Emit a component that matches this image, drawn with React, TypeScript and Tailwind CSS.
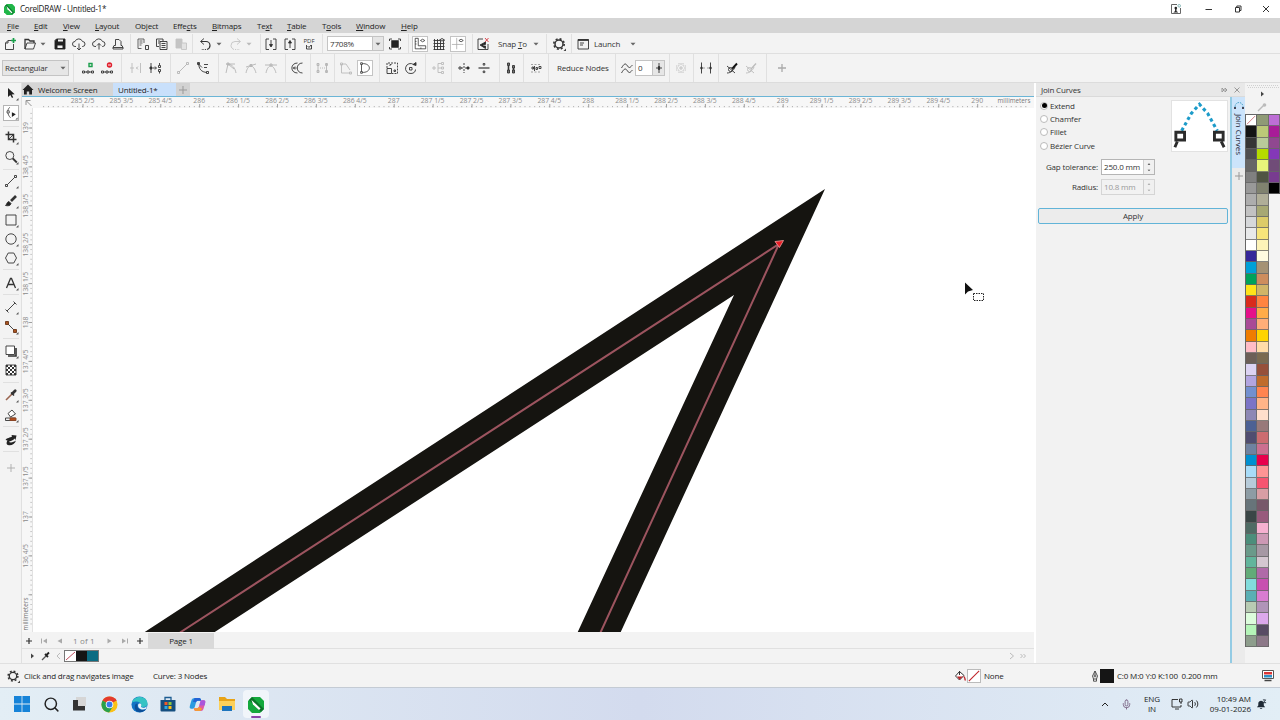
import React from 'react';
import { Settings, Mic, Volume2, Search } from 'lucide-react';

interface IconProps {
  className?: string;
  children: React.ReactNode;
}

const Icon: React.FC<IconProps> = ({ className = '', children }) => (
  <svg
    viewBox="0 0 16 16"
    className={`w-4 h-4 shrink-0 ${className}`}
    fill="none"
    stroke="currentColor"
    strokeWidth={0.9}
  >
    {children}
  </svg>
);

const Sep = ({ className = '' }: { className?: string }) => (
  <div className={`w-px h-full shrink-0 bg-[#e0e0e0] ${className}`} />
);

const Caret = ({ className = '' }: { className?: string }) => (
  <svg viewBox="0 0 8 8" className={`w-2 h-2 shrink-0 text-[#666] ${className}`}>
    <path d="M1.5 2.7h5L4 5.5z" fill="currentColor" />
  </svg>
);

const menus = [
  { pre: '', key: 'F', post: 'ile', width: 'w-[27px]' },
  { pre: '', key: 'E', post: 'dit', width: 'w-[29px]' },
  { pre: '', key: 'V', post: 'iew', width: 'w-[32px]' },
  { pre: '', key: 'L', post: 'ayout', width: 'w-[40px]' },
  { pre: 'Ob', key: 'j', post: 'ect', width: 'w-[38px]' },
  { pre: 'Effe', key: 'c', post: 'ts', width: 'w-[39px]' },
  { pre: '', key: 'B', post: 'itmaps', width: 'w-[45px]' },
  { pre: 'Te', key: 'x', post: 't', width: 'w-[30px]' },
  { pre: '', key: 'T', post: 'able', width: 'w-[35px]' },
  { pre: 'T', key: 'o', post: 'ols', width: 'w-[34px]' },
  { pre: '', key: 'W', post: 'indow', width: 'w-[45px]' },
  { pre: '', key: 'H', post: 'elp', width: 'w-[30px]' },
];

const TitleBar = () => (
  <div className="flex items-center h-[18px] bg-white shrink-0">
    <svg viewBox="0 0 12 12" className="w-[11px] h-[11px] ml-1">
      <path d="M3 0h6l3 3v6l-3 3H3L0 9V3z" fill="#20b648" />
      <path d="M1 2l2-1.5L11 9 9 11.5z" fill="#0e7d30" />
      <path d="M2.6 2.2l1.2 3.4 4.4 4.6 1-1z" fill="#fff" />
    </svg>
    <span className="ml-[5px] text-[8.2px] tracking-[-0.3px] text-[#222]">CorelDRAW - Untitled-1*</span>
    <div className="flex items-center ml-auto text-[#333]">
      <svg viewBox="0 0 10 10" className="w-[10px] h-[10px] mr-[24px]" fill="none" stroke="#666">
        <path d="M6 .5H.5v9h9V4" />
        <circle cx="4.800" cy="4" r="1.300" fill="#222" stroke="none" />
        <path d="M2.500 8.500q.3-1 1.600-1.300V5h1.400v2.200q1.300.3 1.600 1.300z" fill="#222" stroke="none" />
        <circle cx="8.200" cy="1.800" r="1.300" stroke="#6ba6a6" strokeWidth="0.800" />
      </svg>
      <svg viewBox="0 0 8 8" className="w-2 h-2 mr-[21px]" stroke="currentColor">
        <path d="M.5 4.500h6.500" />
      </svg>
      <svg viewBox="0 0 8 8" className="w-2 h-2 mr-[20px]" stroke="currentColor" fill="none">
        <path d="M1.500 2.500h4V7h-4zM2.800 2.500V1H7v4.500H5.500" />
      </svg>
      <svg viewBox="0 0 8 8" className="w-2 h-2 mr-[10px]" stroke="currentColor">
        <path d="M1 1l6 6M7 1L1 7" />
      </svg>
    </div>
  </div>
);

const MenuBar = () => (
  <div className="flex items-center h-[15px] bg-[#d5d5d5] pl-[7px] shrink-0 text-[8px] text-[#222]">
    {menus.map((m) => (
      <span key={m.pre + m.key + m.post} className={`${m.width} shrink-0 whitespace-nowrap`}>
        {m.pre}
        <span className="underline underline-offset-1">{m.key}</span>
        {m.post}
      </span>
    ))}
  </div>
);

const StandardBar = () => (
  <div className="flex items-center h-[21px] pt-px bg-[#f3f3f3] border-b border-[#dfdfdf] shrink-0 text-[8px] text-[#333]">
    <Icon className="ml-[2px]">
      <path d="M9 4.500H6L3.500 7v6.500h8V8M6 4.500V7H3.500" />
      <path d="M11.500 2v5M9 4.500h5" stroke="#18a04a" strokeWidth="1.700" />
    </Icon>
    <Icon className="ml-1">
      <path d="M3 13V3.500h3.500L8 5h4v2" strokeWidth="1.300" />
      <path d="M3 13l2-6h8.500l-2 6z" />
    </Icon>
    <Caret className="ml-px" />
    <Icon className="ml-[5px]">
      <path d="M4.500 3H13v10H3V4.500z" fill="#222" stroke="#222" />
      <path d="M6 3.500h5v2H6zM5.500 9.500h5v2.500h-5z" fill="#f3f3f3" stroke="none" />
    </Icon>
    <Icon className="ml-[3px]">
      <path d="M5 10.500H4a2.400 2.400 0 010-5 4 4 0 017.500 0 2.500 2.500 0 010 5H11" />
      <path d="M8 7.500V14M6 12l2 2 2-2" />
    </Icon>
    <Icon className="ml-1">
      <path d="M5 10.500H4a2.400 2.400 0 010-5 4 4 0 017.500 0 2.500 2.500 0 010 5H11" />
      <path d="M8 13.500V7.500M6 9.500l2-2 2 2" />
    </Icon>
    <Icon className="ml-[3px]">
      <path d="M5.500 9.500v-6h3.500l2 2v4M5.500 9.500H4l-1 2v1.500h10v-1.500l-1-2h-1M3 11.500h10" />
    </Icon>
    <Sep className="ml-1" />
    <Icon className="ml-1">
      <path d="M6.500 12.500H3V3h6v4M4.500 5h3M4.500 7h3M4.500 9h2" stroke="#555" />
      <path d="M10.500 9.500h3v4h-3z" />
    </Icon>
    <Icon className="ml-[3px]">
      <path d="M5 10.500H2.500V3H9v2M4 5h2M4 7h1.500" />
      <path d="M6 5.500h7v8H6zM7.500 7.500h4M7.500 9.500h4M7.500 11.500h4" />
    </Icon>
    <Icon className="ml-[3px] text-[#c4c4c4]">
      <path d="M3 3h6v9H3z" fill="#c4c4c4" />
      <path d="M8.500 7h5v6.500h-5z" fill="#e2e2e2" />
    </Icon>
    <Sep className="ml-[3px]" />
    <Icon className="ml-1">
      <path d="M4 5.500h5a4 4 0 014 4c0 2-1.500 3.500-3 4" strokeWidth="1.200" />
      <path d="M7 2.500l-3.500 3 3.500 3" />
      <path d="M9 13.500H4" strokeDasharray="1.200 1.200" />
    </Icon>
    <Caret className="ml-[2px]" />
    <Icon className="ml-[5px] text-[#c4c4c4]">
      <path d="M12 5.500H7a4 4 0 00-4 4c0 2 1.500 3.500 3 4" />
      <path d="M9 2.500l3.500 3-3.500 3" />
      <path d="M7 13.500h5" strokeDasharray="1.200 1.200" />
    </Icon>
    <Caret className="ml-px opacity-40" />
    <Sep className="ml-[7px]" />
    <Icon className="ml-[2px]">
      <path d="M6 3H3v10.500h3M10 3h3v10.500h-3M8 4v6" />
      <path d="M6.500 8.500h3L8 11z" fill="#222" />
    </Icon>
    <Icon className="ml-[3px]">
      <path d="M6 3H3v10.500h3M10 3h3v10.500h-3M8 6v6" />
      <path d="M6.500 7h3L8 4.500z" fill="#222" />
    </Icon>
    <div className="flex flex-col items-center w-4 ml-[3px]">
      <span className="text-[6px] leading-[6px] tracking-normal">PDF</span>
      <svg viewBox="0 0 8 6" className="w-2 h-[6px]" fill="none" stroke="currentColor" strokeWidth="0.900">
        <path d="M1.500 1v4h5V1M2.500 2l1.500 1.500L6 1" />
      </svg>
    </div>
    <Sep className="ml-[5px]" />
    <div className="flex items-center w-[57px] h-[15px] ml-1 bg-white border border-[#c4c4c4] shrink-0">
      <span className="pl-[2px]">7708%</span>
      <div className="flex items-center justify-center w-[11px] h-full ml-auto bg-[#e6e6e6] border-l border-[#c4c4c4]">
        <Caret />
      </div>
    </div>
    <Icon className="ml-[3px]">
      <path d="M5 5h6v6H5z" fill="#222" stroke="#222" strokeWidth="1.500" />
      <path d="M2.500 5V3H5M11 3h2.500v2M13.500 11v2H11M5 13H2.500v-2" />
    </Icon>
    <Sep className="ml-[5px]" />
    <Icon className="ml-[3px] bg-white border border-[#c4c4c4]">
      <path d="M2.500 1.500v12h12v-3.500H6V1.500z" />
      <path d="M8.500 4q2.500-3 5 0-2.500 3-5 0z" />
      <path d="M2.500 5h1.500M2.500 8h1.500M9 13.500v-1.500" />
    </Icon>
    <Icon className="ml-[3px]">
      <path d="M3.500 3v11M6.500 3v11M9.500 3v11M12.500 3v11M2.500 4.500h11M2.500 7.500h11M2.500 10.500h11M2.500 13.500h11" />
      <path d="M8.500 4q2.500-3 5 0-2.500 2-5 0z" fill="#eee" />
    </Icon>
    <Icon className="ml-[3px] bg-white border border-[#c4c4c4]">
      <path d="M6.500 1v13M1 8.500h13" stroke="#aaa" />
      <path d="M9 4q2.500-3 5 0-2.500 3-5 0z" />
    </Icon>
    <Sep className="ml-[6px]" />
    <Icon className="ml-[2px]">
      <path d="M8 3H3v10.500h10V8" />
      <path d="M10.500 6L5 9l5.500 3.500v-2.500H8V8.500h2.500z" fill="#222" />
      <path d="M10 2l3.500 4M13.500 2L10 6" stroke="#d8343c" />
    </Icon>
    <span className="w-[30px] ml-[7px] shrink-0 whitespace-nowrap">
      Snap <span className="underline underline-offset-1">T</span>o
    </span>
    <Caret className="ml-1" />
    <Sep className="ml-[6px]" />
    <Icon className="ml-1">
      <circle cx="8" cy="8" r="4" strokeWidth="1.500" />
      <circle cx="8" cy="8" r="5.200" strokeWidth="1.600" strokeDasharray="2 2.080" />
      <path d="M15 12.500V15h-2.500z" fill="#444" stroke="none" />
    </Icon>
    <Sep className="ml-1" />
    <Icon className="ml-[3px]">
      <path d="M3 3.500h10.500v9.500H3z" />
      <path d="M3 4h10.500" strokeWidth="1.800" />
      <path d="M5 7h4M5 9h3" />
    </Icon>
    <span className="w-[28px] ml-[3px] shrink-0">Launch</span>
    <Caret className="ml-[7px]" />
  </div>
);

const PropertyBar = () => (
  <div className="flex items-center h-[29px] bg-[#f3f3f3] border-b border-[#dcdcdc] shrink-0 text-[8px] text-[#333]">
    <div className="flex items-center w-[67px] h-4 ml-[2px] bg-[#e6e6e6] border border-[#c4c4c4] shrink-0">
      <span className="pl-[2px]">Rectangular</span>
      <Caret className="ml-auto mr-px" />
    </div>
    <Sep className="ml-1" />
    <Icon className="ml-[6px]">
      <path d="M2.500 11h2v2h-2zM7 11h2v2H7zM11.500 11h2v2h-2zM4.500 12H7M9 12h2.500" />
      <path d="M9 3.500h3V6.500H9z" stroke="#1b9e4b" strokeWidth="1.400" />
    </Icon>
    <Icon className="ml-[3px]">
      <path d="M2.500 11h2v2h-2zM7 11h2v2H7zM11.500 11h2v2h-2zM4.500 12H7M9 12h2.500" />
      <circle cx="10.500" cy="5" r="2.700" fill="#e01f2d" stroke="none" />
      <path d="M9 5h3" stroke="#fff" />
    </Icon>
    <Sep className="ml-[6px]" />
    <Icon className="ml-[6px] text-[#bbb]">
      <path d="M4 3v3M4 10v3M12.500 3v10M3 7h2v2H3zM8 8h1.500M10 6.500L8.500 8 10 9.500" />
    </Icon>
    <Icon className="ml-[3px]">
      <path d="M4 3v10M6 8h3M8 6.500L9.500 8 8 9.500M12.500 3v2M12.500 11.500v2M11.500 5.500h2v2h-2zM11.500 9.500h2v2h-2z" />
      <path d="M3 7h2v2H3z" fill="#333" />
    </Icon>
    <Sep className="ml-[7px]" />
    <Icon className="ml-1 text-[#b4b4b4]">
      <path d="M4 12l8-8M2.500 11.500h2v2h-2zM11.500 2.500h2v2h-2z" />
    </Icon>
    <Icon className="ml-1">
      <path d="M3 3.500l4 4M3.500 3C4 9 6 12 12 12.500M2.500 2.500h2v2h-2zM11.500 11.500h2v2h-2zM9 4.500h4M9 7.500h3" />
    </Icon>
    <Sep className="ml-[7px]" />
    <Icon className="ml-1 text-[#b4b4b4]">
      <path d="M3 4h9M5 4l-2 9M5 4c5 1 7 4 8 9M5 4l6 5M4 3h2v2H4z" />
    </Icon>
    <Icon className="ml-1 text-[#b4b4b4]">
      <path d="M3 7l10-3M3 13c1-5 3-7 5-7s4 3 5 7M7 4.500h2v2H7z" />
    </Icon>
    <Icon className="ml-1 text-[#b4b4b4]">
      <path d="M2 5h12M3 13c1-5 3-7 5-7s4 3 5 7M7 4h2v2H7z" />
    </Icon>
    <Sep className="ml-[6px]" />
    <Icon className="ml-[3px]">
      <path d="M8.500 3C1 3 1 13 8.500 13M13.500 3c-7 0-7 10 0 10M4 8h3.500M6 6.500L4.500 8 6 9.500" />
    </Icon>
    <Sep className="ml-[5px]" />
    <Icon className="ml-[3px] text-[#b4b4b4]">
      <path d="M4 3v10M12.500 3v10M3 3.500h2v2H3zM3 10.500h2v2H3zM11.500 3.500h2v2h-2zM11.500 10.500h2v2h-2z" />
      <path d="M6 8h5" strokeDasharray="1 1" />
    </Icon>
    <Sep className="ml-1" />
    <Icon className="ml-[3px] text-[#bbb]">
      <path d="M3.500 4v9h9M4 4h4l4 6M2.500 3h2v2h-2zM11.500 12h2v2h-2z" />
    </Icon>
    <Icon className="ml-[3px] bg-white border border-[#c4c4c4]">
      <path d="M4 3v10M4 3c12-1 12 11 0 10" />
      <path d="M3 2h2v2H3zM3 12h2v2H3z" fill="#fff" />
    </Icon>
    <Sep className="ml-[6px]" />
    <Icon className="ml-1">
      <path d="M3 8.500h4.500v5H3z" />
      <path d="M3 8V3h10.500v10.500H8" strokeDasharray="2 1" />
      <path d="M10 10h1.500v1.500H10zM6 6V4.500h1.500" />
    </Icon>
    <Icon className="ml-[3px]">
      <path d="M10.500 4.500A5 5 0 108 13.500c3 0 4.500-2 4.500-4" />
      <path d="M6.500 7.500H9V10H6.500z" />
      <path d="M10 4.500l3-2v3z" fill="#333" />
    </Icon>
    <Sep className="ml-[6px]" />
    <Icon className="ml-1 text-[#bbb]">
      <path d="M11.500 2.500h2v2h-2zM11.500 7h2v2h-2zM11.500 11.500h2v2h-2zM3 7h2v2H3zM8 3.500h3M8 8h3M8 12.500h3M8 3.500v9" />
    </Icon>
    <Sep className="ml-[5px]" />
    <Icon className="ml-1">
      <path d="M8 3v10" strokeDasharray="2 1" />
      <path d="M3 7h2v2H3zM5 8h2M9 8h2" />
      <path d="M11 7h2v2h-2z" fill="#222" />
    </Icon>
    <Icon className="ml-1">
      <path d="M2.500 8h11" strokeWidth="1.200" />
      <path d="M7.200 3.500h1.600v1.600H7.200zM7.200 11h1.600v1.600H7.200z" />
    </Icon>
    <Sep className="ml-[7px]" />
    <Icon className="ml-[3px]">
      <path d="M5.500 5.500V10M10.500 8v2" strokeWidth="1.600" />
      <path d="M4.500 3h2v2.500h-2zM9.500 5.500h2V8h-2zM4.500 10h2v3h-2zM9.500 10h2v3h-2z" fill="#777" />
    </Icon>
    <Sep className="ml-1" />
    <Icon className="ml-1">
      <path d="M3 4.500h10M3 12h10" strokeDasharray="2 1.500" stroke="#999" />
      <path d="M4 7h1.500v2H4zM8 7.500h1.500v2H8zM11 6.500h2v2h-2zM6.500 6v5" />
    </Icon>
    <Sep className="ml-1" />
    <span className="w-[50px] ml-2 shrink-0 whitespace-nowrap">Reduce Nodes</span>
    <Sep className="ml-2" />
    <Icon className="ml-[3px]">
      <path d="M2.500 8c3-5 4-5 6-2s3 1 5-1M2.500 13c3-5 4-5 6-2s3 1 5-1" />
    </Icon>
    <div className="flex items-center w-[30px] h-4 bg-white border border-[#c4c4c4] shrink-0">
      <span className="pl-[2px]">0</span>
      <div className="flex items-center justify-center w-[12px] h-full ml-auto bg-[#e6e6e6] border-l border-[#c4c4c4]">
        <svg viewBox="0 0 8 10" className="w-2 h-[10px]" stroke="#333" strokeWidth="0.900">
          <path d="M4 0v10M1 5h6" />
          <path d="M3.400 3.500h1.200v3H3.400z" fill="#222" />
        </svg>
      </div>
    </div>
    <Sep className="ml-1" />
    <Icon className="ml-[3px] text-[#c0c0c0]">
      <path d="M6 3v3H3M10 3v3h3M6 13v-3H3M10 13v-3h3" strokeDasharray="1.500 0.800" />
      <path d="M7 7h2v2H7zM8 3v2M8 11v2M3 8h2M11 8h2" />
    </Icon>
    <Sep className="ml-1" />
    <Icon className="ml-1">
      <path d="M3.500 2.500v11M12.500 2.500v11" />
      <path d="M2.900 7h1.200v2H2.900zM11.900 7h1.200v2h-1.200z" fill="#333" />
      <path d="M5 8h2M9 8h2" stroke="#999" />
    </Icon>
    <Sep className="ml-1" />
    <Icon className="ml-[5px]">
      <path d="M3 6l8 7M3 13c4 0 7-3 8-6" />
      <path d="M8 9l5-5.500" stroke="#111" strokeWidth="1.900" />
      <circle cx="6.500" cy="9.500" r="2" />
    </Icon>
    <Icon className="ml-[3px] text-[#bbb]">
      <path d="M3 6l8 7M3 13c4 0 7-3 8-6" />
      <path d="M8 9l5-5.500" strokeWidth="1.300" />
      <circle cx="6.500" cy="9.500" r="2" />
    </Icon>
    <Sep className="ml-[7px]" />
    <Icon className="ml-[7px] text-[#aaa]">
      <path d="M8 4v8M4 8h8" strokeWidth="1.300" />
    </Icon>
  </div>
);

interface ToolProps {
  className?: string;
  flyout?: boolean;
  children: React.ReactNode;
}

const Tool: React.FC<ToolProps> = ({ className = '', flyout = true, children }) => (
  <Icon className={className}>
    {children}
    {flyout && <path d="M15.500 13v2.500H13z" fill="#555" stroke="none" />}
  </Icon>
);

const Toolbox = () => (
  <div className="flex flex-col items-center w-[21px] h-full bg-[#f3f3f3] shrink-0 text-[#333]">
    <Tool className="mt-[2px]">
      <path d="M5 3v9l2.300-2 1.700 3 1.200-.8-1.500-2.700 3-.3z" fill="#222" stroke="none" />
    </Tool>
    <Tool className="mt-1 bg-white border border-[#b4b4b4]">
      <path d="M6.500 1.500c-3 3-3 8 1 12" />
      <path d="M3.500 5.500h2.500v2.500H3.500z" fill="#fff" />
      <path d="M9 7v5.500l4.500-3z" fill="#222" stroke="none" />
    </Tool>
    <div className="w-4 h-px mt-[5px] bg-[#e0e0e0]" />
    <Tool className="mt-[2px]">
      <path d="M5.500 2.500v8H13.500M2.500 5.500h8V13.500" strokeWidth="1.500" />
      <path d="M5 11l6-6" />
    </Tool>
    <Tool className="mt-1">
      <circle cx="6.800" cy="6.500" r="4" />
      <path d="M9.800 9.500l4 4" strokeWidth="1.800" />
    </Tool>
    <div className="w-4 h-px mt-1 bg-[#e0e0e0]" />
    <Tool className="mt-[3px]">
      <path d="M4.500 11.500l7-7M2.500 11.500h2v2h-2zM11.500 2.500h2v2h-2z" />
    </Tool>
    <Tool className="mt-1">
      <path d="M13 3L8 8" strokeWidth="2.600" />
      <path d="M2.500 12.500c1 0 1-3.500 3.500-4l2 2c-.5 2.500-3 2.500-5.500 2z" fill="#222" />
    </Tool>
    <Tool className="mt-[3px]">
      <path d="M3 3h10v10H3z" />
    </Tool>
    <Tool className="mt-[3px]">
      <circle cx="8" cy="8" r="5.200" />
    </Tool>
    <Tool className="mt-[3px]">
      <path d="M5.200 3h5.600l2.700 5-2.700 5H5.200L2.500 8z" />
    </Tool>
    <div className="w-4 h-px mt-[3px] bg-[#e0e0e0]" />
    <Tool className="mt-[5px]">
      <path d="M3.500 13L7.500 3.500h1l4 9.500M5 9.500h6" strokeWidth="1.300" />
    </Tool>
    <div className="w-4 h-px mt-[3px] bg-[#e0e0e0]" />
    <Tool className="mt-1">
      <path d="M4 12l8-8M2.500 10.500l3 3M10.500 2.500l3 3" />
    </Tool>
    <Tool className="mt-1">
      <path d="M4 4l8 8" />
      <path d="M2.500 2.500h3v3h-3zM10.500 10.500h3v3h-3z" fill="#a85420" stroke="#6b3518" />
    </Tool>
    <div className="w-4 h-px mt-[3px] bg-[#e0e0e0]" />
    <Tool className="mt-1">
      <path d="M5 13h8V5" strokeWidth="1.600" />
      <path d="M3 3h8.500v8.500H3z" fill="#fff" />
    </Tool>
    <Tool className="mt-[3px]" flyout={false}>
      <path d="M3 3h10v10H3z" fill="#fff" />
      <path d="M3 4h10M3 8h10M3 12h10" strokeDasharray="2 2" strokeWidth="2" />
      <path d="M5 6h8M5 10h8" strokeDasharray="2 2" strokeWidth="2" />
    </Tool>
    <div className="w-4 h-px mt-1 bg-[#e0e0e0]" />
    <Tool className="mt-1">
      <path d="M3 13l6-6" stroke="#9a6550" strokeWidth="1.600" />
      <path d="M8 5.500l3 3" strokeWidth="1.600" />
      <path d="M9.500 6.500l2.700-2.700" strokeWidth="2.800" strokeLinecap="round" />
    </Tool>
    <Tool className="mt-1">
      <path d="M5 6.500l4-3.500 3.500 4-5 3z" fill="#fff" />
      <path d="M2.500 11h10v2.500h-10z" fill="#eee" />
      <path d="M7 11h6v2.500H7z" fill="#b34d1b" stroke="#8a4524" />
    </Tool>
    <div className="w-4 h-px mt-[3px] bg-[#e0e0e0]" />
    <Tool className="mt-[5px]" flyout={false}>
      <path d="M2.500 8C4 5.500 7 6 9 4.500L8.500 3l5 .5-1 4.500-1-1.500C10 9 7 8.500 6 10c2 1 5 0 7-1.500C12 12 8 14 5 13c-2-.7-1.500-3-.5-4.500z" fill="#222" stroke="none" />
    </Tool>
    <div className="w-4 h-px mt-[3px] bg-[#e0e0e0]" />
    <Tool className="mt-2 text-[#aaa]" flyout={false}>
      <path d="M8 4v8M4 8h8" />
    </Tool>
  </div>
);

const fifths = ['', ' 1/5', ' 2/5', ' 3/5', ' 4/5'];
const STEP = 38.9;

// labels count in fifths of a millimetre
const hLabels = Array.from({ length: 24 }, (_, i) => {
  const n = i + 2;
  return { x: 82.5 + i * STEP, text: `${285 + Math.floor(n / 5)}${fifths[n % 5]}` };
});

const vLabels = Array.from({ length: 13 }, (_, i) => {
  const n = 5 * 139 - i;
  return { y: 128 + i * STEP, text: `${Math.floor(n / 5)}${fifths[n % 5]}` };
});

const hTicks = Array.from({ length: 203 }, (_, i) => 43.6 + (i * STEP) / 8);
const vTicks = Array.from({ length: 106 }, (_, i) => 113.4 + (i * STEP) / 8);

const TopRuler = () => (
  <svg viewBox="22 97 1012 11" className="w-[1012px] h-[11px] bg-[#f7f7f7] shrink-0 tracking-normal">
    <path d="M26 105V100.500h4.500M26.500 101l5 5" stroke="#888" strokeWidth={0.9} fill="none" />
    {hTicks.map((x) => (
      <path key={x} d={`M${x} 106v1.200`} stroke="#aaa" strokeWidth={0.9} />
    ))}
    {hLabels.map((l) => (
      <g key={l.text}>
        <path d={`M${l.x + 0.5} 104v3.500`} stroke="#999" strokeWidth={0.9} />
        <text x={l.x} y={103} fontSize={6.8} textAnchor="middle" fill="#8b8b8b">
          {l.text}
        </text>
      </g>
    ))}
    <text x={1014} y={103} fontSize={6.3} textAnchor="middle" fill="#777">
      millimeters
    </text>
  </svg>
);

const SideRuler = () => (
  <svg viewBox="22 108 11 524" className="w-[11px] h-[524px] bg-[#f7f7f7] shrink-0 tracking-normal">
    <path d="M32.500 108v524" stroke="#e2e2e2" />
    {vTicks.map((y) => (
      <path key={y} d={`M30.500 ${y}h1.200`} stroke="#aaa" strokeWidth={0.9} />
    ))}
    {vLabels.map((l) => (
      <g key={l.text}>
        <path d={`M28.500 ${l.y}h3.500`} stroke="#999" strokeWidth={0.9} />
        {l.y < 580 && (
          <text
            transform={`translate(27.500 ${l.y}) rotate(-90)`}
            fontSize={6.8}
            textAnchor="middle"
            fill="#8b8b8b"
          >
            {l.text}
          </text>
        )}
      </g>
    ))}
    <text transform="translate(27.500 614) rotate(-90)" fontSize={6.3} textAnchor="middle" fill="#777">
      millimeters
    </text>
  </svg>
);

const Canvas = () => (
  <svg viewBox="33 108 1001 524" className="w-[1001px] h-[524px] bg-white shrink-0">
    <path d="M144 632.500L825 189 620.500 632.500H577.500L734 295 214 632.500z" fill="#151410" />
    <path d="M180 632.500L779 244 600.500 632.500" fill="none" stroke="#9c545f" strokeWidth={2} />
    <path d="M775 241.500l8.500-1-4 7z" fill="#e81c24" stroke="#f4a0a0" strokeWidth={0.8} />
    <path d="M965 282.500v12l3-3 5-1.500z" fill="#111" />
    <path d="M973.500 293.500h10v7h-10z" fill="none" stroke="#222" strokeDasharray="1.500 1" />
  </svg>
);

const Workspace = () => (
  <div className="flex flex-col w-[1013px] h-full border-l border-[#e0e0e0] bg-[#f3f3f3] shrink-0">
    <div className="flex items-center h-[13px] bg-[#e6e6e6] text-[8px] text-[#222] shrink-0">
      <div className="flex items-center w-[91px] h-full bg-[#d5d5d5]">
        <svg viewBox="0 0 12 11" className="w-3 h-[11px] shrink-0" fill="#222">
          <path d="M6 .5L.5 6H2v4.500h2.800V7.500h2.400v3H10V6h1.500z" />
        </svg>
        <span className="ml-[4px] whitespace-nowrap">Welcome Screen</span>
      </div>
      <div className="flex items-center w-[63px] h-full pl-[5px] bg-[#c9e0fb]">Untitled-1*</div>
      <div className="flex items-center justify-center w-[14px] h-full bg-[#d2d2d2]">
        <svg viewBox="0 0 8 8" className="w-2 h-2" stroke="#999">
          <path d="M4 0v8M0 4h8" />
        </svg>
      </div>
    </div>
    <div className="h-px bg-[#6bb5d6] shrink-0" />
    <TopRuler />
    <div className="flex shrink-0">
      <SideRuler />
      <Canvas />
    </div>
    <div className="flex items-center h-[17px] pt-px shrink-0 border-b border-[#e0e0e0] text-[8px] text-[#888]">
      <svg viewBox="22 0 40 16" className="w-[40px] h-4 shrink-0" fill="#aaa">
        <path d="M29 5v6M26 8h6" stroke="#333" strokeWidth="1.200" />
        <path d="M41.500 5.500v5" stroke="#aaa" />
        <path d="M47 5.500v5L43 8zM62 5.500v5L57.500 8z" />
      </svg>
      <span className="w-[28px] ml-[11px] tracking-[0.15px] whitespace-nowrap">1 of 1</span>
      <svg viewBox="104 0 44 16" className="w-[44px] h-4 ml-[3px] shrink-0" fill="#aaa">
        <path d="M107.500 5.500v5l4-2.500zM122 5.500v5l4-2.500z" />
        <path d="M127.500 5.500v5" stroke="#aaa" />
        <path d="M140 5v6M137 8h6" stroke="#333" strokeWidth="1.200" />
      </svg>
      <div className="flex items-center justify-center w-[66px] h-4 bg-[#d9d9d9] text-[#222]">Page 1</div>
    </div>
    <div className="flex items-center h-[14px] shrink-0">
      <svg viewBox="22 0 42 14" className="w-[42px] h-[14px] shrink-0">
        <path d="M31 4.500v5l3-2.500z" fill="#444" />
        <path d="M42 11l4-4" stroke="#555" strokeWidth="1.300" />
        <path d="M45 5l3 3M46.500 6l2.500-2.500" stroke="#222" strokeWidth="1.800" />
        <path d="M60 4l-3 3 3 3" stroke="#bbb" fill="none" />
      </svg>
      <div className="flex h-3 border border-[#777] shrink-0">
        <svg viewBox="0 0 11 10" className="w-[11px] h-[10px] bg-white">
          <path d="M1 9l9-8" stroke="#c05060" />
        </svg>
        <div className="w-[11px] bg-[#151515]" />
        <div className="w-[11px] bg-[#0b6b82]" />
      </div>
      <svg viewBox="0 0 24 10" className="w-6 h-[10px] ml-auto mr-[2px]" fill="none" stroke="#bbb">
        <path d="M2 2l3.500 3L2 8M12.500 3l2 2-2 2M15.500 3l2 2-2 2" />
      </svg>
    </div>
  </div>
);

const joinModes = ['Extend', 'Chamfer', 'Fillet', 'Bézier Curve'];

const Spinner = ({ value, disabled = false }: { value: string; disabled?: boolean }) => (
  <div
    className={`flex items-center w-[54px] h-4 border ${
      disabled ? 'border-[#d5d5d5] text-[#999]' : 'border-[#b5b5b5] bg-white text-[#333]'
    }`}
  >
    <span className="pl-[2px] whitespace-nowrap">{value}</span>
    <svg viewBox="0 0 11 14" className="w-[11px] h-[14px] ml-auto bg-[#f0f0f0] border-l border-[#d0d0d0]">
      <path d="M4 4.500h3L5.500 3zM4 10h3l-1.500 1.500z" fill="currentColor" />
    </svg>
  </div>
);

const JoinCurvesDocker = () => (
  <div className="flex w-[209px] h-full flex-col shrink-0 bg-[#f2f2f2] text-[8px] text-[#333]">
    <div className="flex items-center h-[14px] pl-[5px] bg-[#e8e8e8] border-b border-[#dadada] shrink-0">
      <span>Join Curves</span>
      <svg viewBox="0 0 20 8" className="w-5 h-2 ml-auto mr-[4px]" fill="none" stroke="#999">
        <path d="M1 2l2 2-2 2zM4 2l2 2-2 2zM13.500 1.500l5 5M18.500 1.500l-5 5" />
      </svg>
    </div>
    <div className="flex flex-1">
      <div className="flex flex-col w-[194px] pl-[2px]">
        <div className="flex justify-between h-[56px] shrink-0">
          <div className="flex flex-col pt-[2px] pl-[2px]">
            {joinModes.map((mode, i) => (
              <label key={mode} className="flex items-center h-[13.4px]">
                <span className="flex items-center justify-center w-2 h-2 rounded-full border border-[#bbb] bg-white">
                  {i === 0 && <span className="w-[5px] h-[5px] rounded-full bg-black shrink-0" />}
                </span>
                <span className="ml-[2px]">{mode}</span>
              </label>
            ))}
          </div>
          <svg viewBox="0 0 57 50" className="w-[57px] h-[52px] mt-[3px] mr-[2px] bg-white border border-[#e2e2e2]">
            <path d="M10 30L20 12 28.500 2.500 37 12 47 30" fill="none" stroke="#1c9bc9" strokeWidth={3.2} strokeDasharray="3.500 3" />
            <path d="M4 31.500h9v8H4zM44 31.500h9v8h-9z" fill="#fff" stroke="#2b2b2b" strokeWidth={3} />
            <path d="M5.500 41l-2.500 6M51 41l3 6" stroke="#2b2b2b" strokeWidth={3} />
          </svg>
        </div>
        <div className="flex items-center h-5 mt-[4px]">
          <span className="w-[60px] mr-[3px] text-right whitespace-nowrap">Gap tolerance:</span>
          <Spinner value="250.0 mm" />
        </div>
        <div className="flex items-center h-5">
          <span className="w-[60px] mr-[3px] text-right">Radius:</span>
          <Spinner value="10.8 mm" disabled />
        </div>
        <button className="w-[190px] h-4 mt-[11px] rounded-[2px] border border-[#62b4d8] bg-[#ececec] leading-none">
          Apply
        </button>
      </div>
      <div className="w-[2px] bg-[#93cbe4] shrink-0" />
      <div className="flex flex-col items-center w-[13px] bg-[#ebebeb] shrink-0">
        <div className="flex flex-col items-center w-full h-[71px] bg-[#cce4fb]">
          <svg viewBox="0 0 12 12" className="w-3 h-3 mt-[3px]" fill="none">
            <path d="M2 7c0-6 8-6 8 0" stroke="#4aa3c7" strokeDasharray="1.500 1" />
            <path d="M1 7h2v2H1zM9 7h2v2H9z" fill="#445" />
          </svg>
          <span className="mt-[2px] tracking-[-0.05px] leading-[12px] text-[#223] whitespace-nowrap [writing-mode:vertical-rl]">
            Join Curves
          </span>
        </div>
        <svg viewBox="0 0 8 8" className="w-2 h-2 mt-1" stroke="#999">
          <path d="M4 0v8M0 4h8" />
        </svg>
      </div>
    </div>
  </div>
);

const firstColumn = [
  '#141414', '#353535', '#4e4e50', '#666666', '#808080', '#999999', '#adadad', '#c2c2c2', '#d6d8da', '#e8e9ea',
  '#ffffff', '#36289a', '#00a0d8', '#00a25a', '#ffe31a', '#d92b1c', '#e5108a', '#a94b96', '#ef7d00', '#ffbcc5',
  '#6c5f57', '#dcd3f2', '#b2a5e0', '#7290d0', '#7b74c6', '#8d88b5', '#4c6194', '#504d70', '#6f82a0', '#0090d0',
  '#a8dcf8', '#b7cbd9', '#8d9ca4', '#67747a', '#3a4646', '#4f6b64', '#4c8e7b', '#6a9a8a', '#62b59c', '#62ab78',
  '#82dcdc', '#5aafb4', '#b8cbb3', '#dcfcdc', '#b4f4b8', '#8d9d8c',
];

const secondColumn = [
  '#8f9a76', '#bcc878', '#b9ca9a', '#b5dc00', '#e8f57a', '#505443', '#80826f', '#b0ae98', '#a7a873', '#dccb68',
  '#f7e57a', '#fdf3b8', '#fffbe0', '#a59274', '#cd8d5e', '#d0b568', '#ff8440', '#ffac48', '#ffae78', '#ffd400',
  '#ffdca8', '#7a6a50', '#96503a', '#c06c2c', '#ff8450', '#ffb488', '#ffdfcc', '#98797a', '#cc6c70', '#cc6f90',
  '#e8004c', '#ff9494', '#f65470', '#d89ea4', '#77586a', '#985a7c', '#f6b0d0', '#cc98b4', '#a698a4', '#d4c6d0',
  '#b06aa8', '#c850b0', '#d87cd0', '#b094b8', '#dca8ec', '#584c64', '#8c7888',
];

const thirdColumn = ['#bd6ed6', '#a81c98', '#904890', '#8438b8', '#704c78', '#783c90', '#000000'];

const Swatch = ({ color }: { color: string }) => (
  <div className="h-[11.33px] border-r border-b border-[#666]/80 bg-clip-border" style={{ backgroundColor: color }} />
);

const ColorPalette = () => (
  <div className="flex flex-col w-[35px] h-full bg-[#f3f3f3] shrink-0">
    <svg viewBox="0 0 35 31" className="w-[35px] h-[31px] shrink-0">
      <path d="M2 2.500h32M3 4.500h31" stroke="#d0d0d0" strokeDasharray="1 1" />
      <path d="M16 8.500v5l3-2.500z" fill="#444" />
      <path d="M13 28l6-6" stroke="#bbb" strokeWidth="1.500" />
      <circle cx="19.500" cy="22" r="1.800" fill="#bbb" />
    </svg>
    <div className="flex items-start">
      <div className="w-[12px] border-t border-l border-[#666]">
        <svg viewBox="0 0 11 11" className="block w-full h-[11.33px] bg-white border-r border-b border-[#666]">
          <path d="M1 10l9-9" stroke="#d07078" />
        </svg>
        {firstColumn.map((c, i) => (
          <Swatch key={i} color={c} />
        ))}
      </div>
      <div className="w-[12px] border-t border-[#666]">
        {secondColumn.map((c, i) => (
          <Swatch key={i} color={c} />
        ))}
      </div>
      <div className="w-[11px] border-t border-[#666]">
        {thirdColumn.map((c, i) => (
          <Swatch key={i} color={c} />
        ))}
      </div>
    </div>
  </div>
);

const StatusBar = () => (
  <div className="flex items-center h-[24px] bg-[#f3f3f3] border-t border-[#e0e0e0] shrink-0 text-[8px] text-[#222]">
    <svg viewBox="0 0 14 14" className="w-[14px] h-[14px] ml-[6px] shrink-0" fill="none" stroke="#333">
      <circle cx="7" cy="7" r="3.700" strokeWidth="1.300" />
      <circle cx="7" cy="7" r="4.900" strokeWidth="1.500" strokeDasharray="1.900 1.948" />
      <path d="M14 11.500V14h-2.500z" fill="#444" stroke="none" />
    </svg>
    <span className="w-[124px] ml-[4px] whitespace-nowrap">Click and drag navigates image</span>
    <span className="ml-[5px]">Curve: 3 Nodes</span>
    <svg viewBox="0 0 12 12" className="w-3 h-3 ml-auto" fill="none" stroke="#333">
      <path d="M5.500 1.500L1.500 6l4 4 4.500-4.500z" fill="#fff" />
      <path d="M3 6.500h6l-3.500 3.200z" fill="#c0262c" stroke="none" />
      <path d="M5.500 5V1" />
      <path d="M10 6.500q1.500 2.500 1 4" stroke="#c0262c" strokeWidth="1.400" />
    </svg>
    <svg viewBox="0 0 14 14" className="w-[14px] h-[14px] ml-px bg-white border border-[#bbb]">
      <path d="M1 13L13 1" stroke="#c0262c" strokeWidth="1.300" />
    </svg>
    <span className="w-[107px] ml-[3px]">None</span>
    <svg viewBox="0 0 8 12" className="w-2 h-3" fill="none" stroke="#444" strokeWidth="0.900">
      <path d="M4 1v4M4 1L1.500 6l1 3h3l1-3zM2.500 9v2.200h3V9" />
      <circle cx="4" cy="6" r="0.900" />
    </svg>
    <div className="w-[14px] h-[14px] ml-[1px] bg-[#151515]" />
    <span className="w-[145px] ml-[3px] whitespace-pre">C:0 M:0 Y:0 K:100  0.200 mm</span>
    <svg viewBox="0 0 12 12" className="w-3 h-3 mr-[6px]">
      <path d="M.5.500h11v8H.5z" fill="#fff" stroke="#555" />
      <path d="M2 2h8v2.500H2z" fill="#db3434" />
      <path d="M2 5h8v2.500H2z" fill="#2d91c7" />
      <path d="M2.500 10.500h7" stroke="#444" strokeWidth="1.500" />
    </svg>
  </div>
);

const Taskbar = () => (
  <div className="flex items-center h-[33px] shrink-0 border-t border-[#c4cbd4] bg-linear-to-r from-[#e3eef5] via-[#d3dbee] to-[#e2eef6] text-[#222]">
    <svg viewBox="0 0 16 16" className="w-4 h-4 ml-[14px]" fill="#1683d8">
      <path d="M0 0h7.600v7.600H0zM8.400 0H16v7.600H8.400zM0 8.400h7.600V16H0zM8.400 8.400H16V16H8.400z" />
    </svg>
    <Search size={17} strokeWidth={2.1} className="ml-[13px]" />
    <svg viewBox="0 0 16 16" className="w-4 h-4 ml-[11px]">
      <path d="M5 1h10v9H5z" fill="#d6d6d6" />
      <path d="M2 4h5v6h7v4.500H2z" fill="#333" />
    </svg>
    <svg viewBox="0 0 18 18" className="w-[17px] h-[17px] ml-[14px]">
      <circle cx="9" cy="9" r="8.500" fill="#fbc116" />
      <path d="M9 9L1.600 4.800A8.500 8.500 0 0116.400 4.800z" fill="#e33b2e" />
      <path d="M9 9L1.600 4.800A8.500 8.500 0 008.500 17.500l4-6z" fill="#28a04b" />
      <path d="M9 5h7.500l-1-2H5z" fill="#e33b2e" />
      <circle cx="9" cy="9" r="4" fill="#fff" />
      <circle cx="9" cy="9" r="3.100" fill="#377bea" />
    </svg>
    <svg viewBox="0 0 18 18" className="w-[17px] h-[17px] ml-[13px]">
      <circle cx="9" cy="9" r="8.500" fill="#1374c5" />
      <path d="M1 7C3-1 17-1 17.500 8c0 4-5 4.500-7 3 2-4-5-7-9.500-4z" fill="#35c3c4" />
      <path d="M7 8c-2 5 3 8 9 6-4 5-12 4-12-2 0-3 1-4 3-4z" fill="#0c4f98" />
      <path d="M7.500 9.500c.5-2 3-2 3.500 0 0 1-1 1.500 0 2.500 2 1 5 0 6-1.500l-1 3c-4 2-9 0-8.500-4z" fill="#e6f2fa" />
    </svg>
    <svg viewBox="0 0 16 16" className="w-4 h-4 ml-[12px]">
      <path d="M5 4V1.500h6V4" fill="none" stroke="#1c5d92" strokeWidth="1.300" />
      <path d="M.5 4h15v10.500q0 1-1 1h-13q-1 0-1-1z" fill="#164f80" />
      <path d="M4.500 6h3v3h-3z" fill="#f05a28" />
      <path d="M8.500 6h3v3h-3z" fill="#8cc63f" />
      <path d="M4.500 10h3v3h-3z" fill="#2fa8e0" />
      <path d="M8.500 10h3v3h-3z" fill="#fdc010" />
    </svg>
    <svg viewBox="0 0 18 18" className="w-[17px] h-[17px] ml-[13px]">
      <path d="M6 2h4.500q1.500 0 2 1.500L13 5H9.500Q8 5 7.500 6.500L6 12q-.5 1.500-2 1.500H2.500Q0 13.500 1 10l1.800-6Q3.500 2 6 2z" fill="#2b9be0" />
      <path d="M6 2h4.500q1.500 0 2 1.500L13 5H9.500Q8 5 7.500 6.500L4 6z" fill="#2463d4" />
      <path d="M12 16H7.500Q6 16 5.500 14.500L5 13h3.500q1.500 0 2-1.500L12 6q.5-1.500 2-1.500h1.500Q18 4.500 17 8l-1.800 6q-.7 2-3.200 2z" fill="#e05aa4" />
      <path d="M12 16H7.500Q6 16 5.500 14.500L5 13h3.500q1.500 0 2-1.500l3.500 2z" fill="#f49a36" />
      <path d="M12 6q.5-1.500 2-1.500h1.500Q18 4.500 17 8l-.6 2H11z" fill="#a956dc" />
    </svg>
    <svg viewBox="0 0 18 16" className="w-[18px] h-4 ml-[12px]">
      <path d="M1 1h6l2 2h8v11H1z" fill="#e8a317" />
      <path d="M1 5h16v9H1z" fill="#fcd059" />
      <path d="M4 10h10v5H4z" fill="#1d74bd" />
    </svg>
    <div className="flex flex-col items-center justify-end w-[26px] h-[28px] ml-[7px] rounded bg-white/60">
      <svg viewBox="0 0 16 16" className="w-4 h-4">
        <path d="M4 0h8l4 4v8l-4 4H4l-4-4V4z" fill="#14a83c" />
        <path d="M1 3l3-3 12 12-3 3z" fill="#0b7428" />
        <path d="M3.500 3l1.500 4.500L11 13l1.500-1.500z" fill="#fff" />
      </svg>
      <div className="w-[10px] h-[2px] mt-[3px] rounded bg-[#8a44a8]" />
    </div>
    <div className="flex items-center ml-auto text-[8px] tracking-[-0.05px] text-[#222]">
      <svg viewBox="0 0 8 8" className="w-2 h-2" fill="none" stroke="currentColor">
        <path d="M1 6l3-3 3 3" />
      </svg>
      <Mic size={11} className="ml-[12px] text-[#7b6484]" />
      <div className="flex flex-col items-center w-5 ml-[10px] leading-[10.500px]">
        <span>ENG</span>
        <span>IN</span>
      </div>
      <svg viewBox="0 0 12 12" className="w-3 h-3 ml-[9px]" fill="none" stroke="currentColor" strokeWidth="0.900">
        <path d="M7 1.500H1v7.500h9V7M4 11h4M8.500 1h2.500v3H8.500zM10 4v2" />
      </svg>
      <Volume2 size={12} strokeWidth={1.8} className="ml-[4px]" />
      <div className="flex flex-col items-end w-[48px] ml-[4px] leading-[10.500px] whitespace-nowrap">
        <span>10:49 AM</span>
        <span>09-01-2026</span>
      </div>
      <svg viewBox="0 0 12 12" className="w-[11px] h-[11px] ml-[5px] mr-[13px]">
        <path d="M1 9l1.500-2V5c0-4 6-4 6 0v2L10 9zM4 10h3q-1.500 2-3 0z" fill="#1f2a36" />
        <path d="M7.500 1h3L8 4h3" stroke="#1f2a36" fill="none" />
      </svg>
    </div>
  </div>
);

const App: React.FC = () => (
  <div className="flex flex-col w-[1280px] h-[720px] overflow-hidden bg-[#f3f3f3] tracking-[-0.17px] font-['Open_Sans','Noto_Sans',sans-serif]">
    <TitleBar />
    <MenuBar />
    <StandardBar />
    <PropertyBar />
    <div className="flex h-[580px] shrink-0">
      <Toolbox />
      <Workspace />
      <div className="w-[2px] h-full bg-white shrink-0" />
      <JoinCurvesDocker />
      <ColorPalette />
    </div>
    <StatusBar />
    <Taskbar />
  </div>
);

export default App;
